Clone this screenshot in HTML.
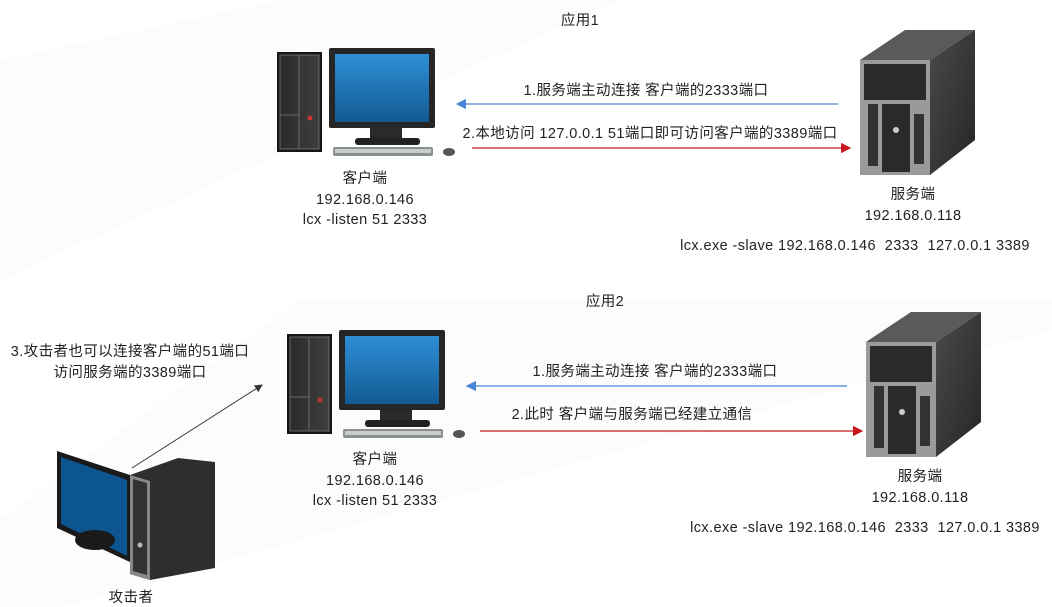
<!DOCTYPE html>
<html><head><meta charset="utf-8"><style>
html,body{margin:0;padding:0;background:#fff;}
svg{display:block}
text{font-family:"Liberation Sans","Noto Sans CJK SC",sans-serif;font-size:14.5px;fill:#222;letter-spacing:0.4px;}
</style></head><body>
<svg width="1052" height="607" viewBox="0 0 1052 607" xmlns="http://www.w3.org/2000/svg">
<defs>
<linearGradient id="scr" x1="0" y1="0" x2="0" y2="1"><stop offset="0" stop-color="#2e8fd6"/><stop offset="1" stop-color="#135a93"/></linearGradient>
<linearGradient id="srv" x1="0" y1="0" x2="1" y2="1"><stop offset="0" stop-color="#4a4a4a"/><stop offset="1" stop-color="#262626"/></linearGradient>
<linearGradient id="tw" x1="0" y1="0" x2="1" y2="0"><stop offset="0" stop-color="#2b2b2b"/><stop offset="1" stop-color="#3e3e3e"/></linearGradient>
<g id="pc">
<rect x="0" y="0" width="45" height="100" fill="#151515"/>
<rect x="3" y="3" width="39" height="94" fill="url(#tw)" stroke="#6a6a6a" stroke-width="1"/>
<line x1="22" y1="3" x2="22" y2="97" stroke="#6a6a6a"/>
<line x1="3" y1="63" x2="22" y2="63" stroke="#6a6a6a"/>
<circle cx="33" cy="66" r="2.5" fill="#c33"/>
<rect x="52" y="-4" width="106" height="80" rx="2" fill="#262626"/>
<rect x="58" y="2" width="94" height="68" fill="url(#scr)"/>
<rect x="93" y="76" width="32" height="12" fill="#2a2a2a"/>
<rect x="78" y="86" width="65" height="7" rx="3" fill="#222"/>
<rect x="56" y="95" width="100" height="9" rx="2" fill="#8a9090"/>
<rect x="58" y="97" width="96" height="4" fill="#c8cccc"/>
<ellipse cx="172" cy="100" rx="6" ry="4" fill="#555"/>
</g>
<g id="server">
<polygon points="0,30 45,0 115,0 70,30" fill="#5a5a5a"/>
<polygon points="70,30 115,0 115,110 70,145" fill="url(#srv)"/>
<rect x="0" y="30" width="70" height="115" fill="#9a9a9a"/>
<rect x="4" y="34" width="62" height="36" fill="#2a2a2a"/>
<rect x="8" y="74" width="10" height="62" fill="#333"/>
<rect x="22" y="74" width="28" height="68" fill="#2a2a2a"/>
<rect x="54" y="84" width="10" height="50" fill="#333"/>
<circle cx="36" cy="100" r="3" fill="#ccc"/>
</g>
<marker id="ab" markerWidth="8" markerHeight="8" refX="7" refY="4" orient="auto"><path d="M0,0 L8,4 L0,8z" fill="#4a86d8"/></marker>
<marker id="ar" markerWidth="8" markerHeight="8" refX="7" refY="4" orient="auto"><path d="M0,0 L8,4 L0,8z" fill="#c8161d"/></marker>
<marker id="ak" markerWidth="8" markerHeight="8" refX="7" refY="4" orient="auto"><path d="M0,0 L8,4 L0,8z" fill="#333"/></marker>
</defs>
<polygon points="0,60 280,0 620,0 0,280" fill="#fcfcfc"/>
<polygon points="0,520 300,300 1052,300 1052,330 60,607 0,607" fill="#fcfcfc"/>

<use href="#pc" x="277" y="52"/>
<use href="#pc" x="287" y="334"/>
<use href="#server" x="860" y="30"/>
<use href="#server" x="866" y="312"/>

<!-- attacker -->
<polygon points="57,451 130,475 130,562 57,528" fill="#1a1a1a"/>
<polygon points="61,457 127,480 127,556 61,524" fill="#0d5590"/>
<ellipse cx="95" cy="540" rx="20" ry="10" fill="#1a1a1a"/>
<polygon points="130,475 178,458 215,462 215,568 150,580 130,574" fill="#2e2e2e"/>
<polygon points="130,475 150,481 150,580 130,574" fill="#888"/>
<polygon points="133,479 147,483 147,575 133,571" fill="#333"/>
<circle cx="140" cy="545" r="2.5" fill="#bbb"/>

<line x1="838" y1="104" x2="457" y2="104" stroke="#4a86d8" stroke-width="1.3" marker-end="url(#ab)"/>
<line x1="472" y1="148" x2="850" y2="148" stroke="#c8161d" stroke-width="1.3" marker-end="url(#ar)"/>
<line x1="847" y1="386" x2="467" y2="386" stroke="#4a86d8" stroke-width="1.3" marker-end="url(#ab)"/>
<line x1="480" y1="431" x2="862" y2="431" stroke="#c8161d" stroke-width="1.3" marker-end="url(#ar)"/>
<line x1="132" y1="468" x2="262" y2="385" stroke="#333" stroke-width="1" marker-end="url(#ak)"/>

<g text-anchor="middle">
<text x="580" y="25">应用1</text>
<text x="646" y="95">1.服务端主动连接 客户端的2333端口</text>
<text x="650" y="138">2.本地访问 127.0.0.1 51端口即可访问客户端的3389端口</text>
<text x="365" y="183">客户端</text>
<text x="365" y="204">192.168.0.146</text>
<text x="365" y="224">lcx -listen 51 2333</text>
<text x="913" y="199">服务端</text>
<text x="913" y="220">192.168.0.118</text>
<text x="855" y="250">lcx.exe -slave 192.168.0.146 &#160;2333 &#160;127.0.0.1 3389</text>
<text x="605" y="306">应用2</text>
<text x="655" y="376">1.服务端主动连接 客户端的2333端口</text>
<text x="632" y="419">2.此时 客户端与服务端已经建立通信</text>
<text x="375" y="464">客户端</text>
<text x="375" y="485">192.168.0.146</text>
<text x="375" y="505">lcx -listen 51 2333</text>
<text x="920" y="481">服务端</text>
<text x="920" y="502">192.168.0.118</text>
<text x="865" y="532">lcx.exe -slave 192.168.0.146 &#160;2333 &#160;127.0.0.1 3389</text>
<text x="130" y="356">3.攻击者也可以连接客户端的51端口</text>
<text x="130" y="377">访问服务端的3389端口</text>
<text x="131" y="602">攻击者</text>
</g>
</svg>
</body></html>
